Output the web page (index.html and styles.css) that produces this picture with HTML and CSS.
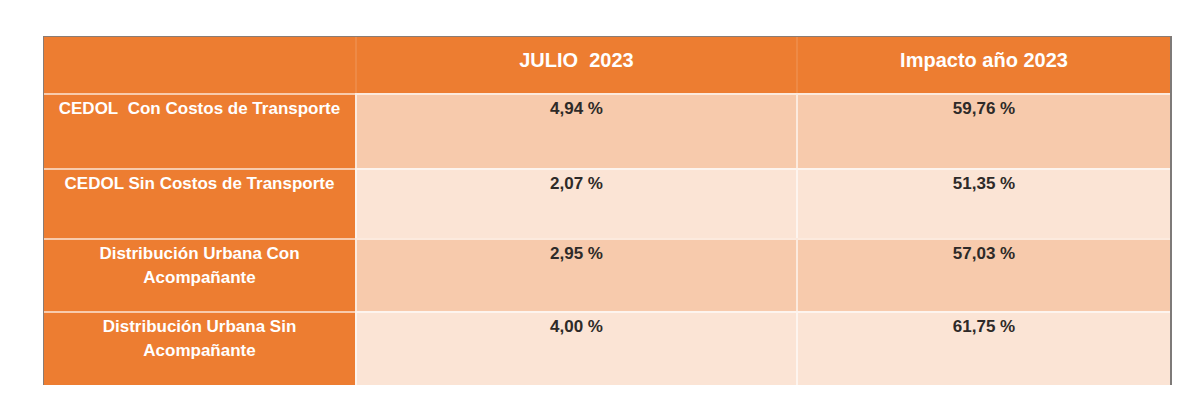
FILE: index.html
```html
<!DOCTYPE html>
<html lang="es">
<head>
<meta charset="utf-8">
<title>CEDOL</title>
<link rel="stylesheet" href="styles.css">
</head>
<body>
<table class="grid">
  <thead>
    <tr class="head-row">
      <th class="label-head"></th>
      <th class="col-head">JULIO&nbsp; 2023</th>
      <th class="col-head">Impacto año 2023</th>
    </tr>
  </thead>
  <tbody>
    <tr class="row dark r1">
      <th class="label">CEDOL&nbsp; Con Costos de Transporte</th>
      <td class="val">4,94 %</td>
      <td class="val">59,76 %</td>
    </tr>
    <tr class="row light r2">
      <th class="label">CEDOL Sin Costos de Transporte</th>
      <td class="val">2,07 %</td>
      <td class="val">51,35 %</td>
    </tr>
    <tr class="row dark r3">
      <th class="label">Distribución Urbana Con Acompañante</th>
      <td class="val">2,95 %</td>
      <td class="val">57,03 %</td>
    </tr>
    <tr class="row light r4">
      <th class="label">Distribución Urbana Sin Acompañante</th>
      <td class="val">4,00 %</td>
      <td class="val">61,75 %</td>
    </tr>
  </tbody>
</table>
</body>
</html>
```

FILE: styles.css
```css
html, body {
  margin: 0;
  background: #ffffff;
}

body {
  padding: 36px 0 0 43px;
  font-family: "Liberation Sans", Arial, sans-serif;
}

.grid {
  width: 1129px;
  border-collapse: separate;
  border-spacing: 0;
  border-top: 1px solid #8a7c74;
  border-left: 1px solid #8a7c74;
  border-right: 2px solid #7e7a78;
  table-layout: fixed;
}

.grid th,
.grid td {
  padding: 0;
  vertical-align: top;
  text-align: center;
}

.head-row th {
  background: #ed7d31;
  color: #ffffff;
  font-size: 20px;
  font-weight: bold;
  line-height: 24px;
  height: 56px;
  padding-top: 11px;
  box-sizing: border-box;
}

.label-head {
  width: 311px;
}

.col-head {
  border-left: 2px solid rgba(255, 255, 255, 0.1);
}

.head-row th:nth-child(2) {
  width: 441px;
}

.row th,
.row td {
  border-top: 2px solid rgba(255, 255, 255, 0.6);
  font-size: 17px;
  font-weight: bold;
  line-height: 24px;
  padding-top: 2px;
  box-sizing: border-box;
}

.label {
  background: #ed7d31;
  color: #ffffff;
  padding-left: 8px !important;
  padding-right: 8px !important;
}

.val {
  color: #2e2a28;
  border-left: 2px solid rgba(255, 255, 255, 0.6);
}

.dark .val {
  background: #f7caac;
}

.light .val {
  background: #fbe4d5;
}

.r1 th, .r1 td { height: 75px; }
.r2 th, .r2 td { height: 70px; }
.r3 th, .r3 td { height: 73px; }
.r4 th, .r4 td { height: 74px; }
```
